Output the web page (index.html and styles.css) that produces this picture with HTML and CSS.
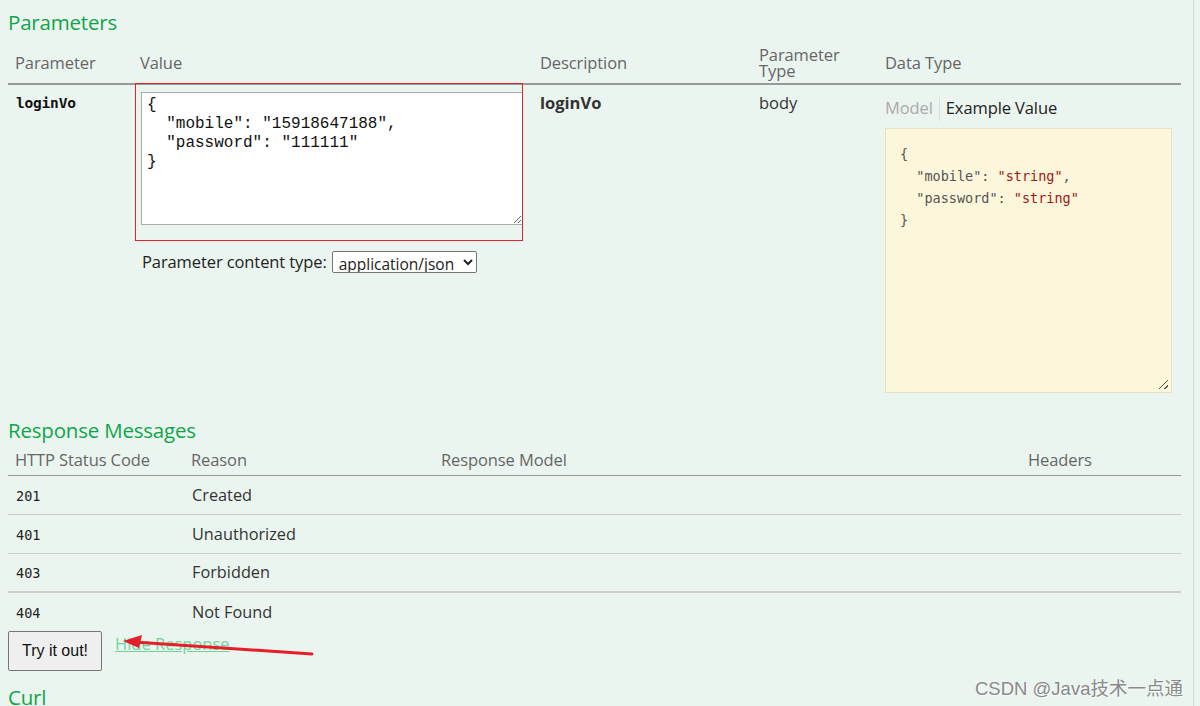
FILE: index.html
```html
<!DOCTYPE html>
<html>
<head>
<meta charset="utf-8">
<link rel="stylesheet" href="styles.css">
</head>
<body>
<div class="page">
  <h4 class="section-title">Parameters</h4>
  <table class="params">
    <thead>
      <tr>
        <th class="c-param">Parameter</th>
        <th class="c-value">Value</th>
        <th class="c-desc">Description</th>
        <th class="c-ptype">Parameter<br>Type</th>
        <th class="c-dtype">Data Type</th>
      </tr>
    </thead>
    <tbody>
      <tr>
        <td class="c-param"><code class="pname">loginVo</code></td>
        <td class="c-value">
          <div class="value-wrap">
            <textarea class="body-input" spellcheck="false">{
  "mobile": "15918647188",
  "password": "111111"
}</textarea>
            <div class="annot-box"></div>
          </div>
          <div class="ctype">
            <label>Parameter content type:</label>
            <select class="ctype-select"><option>application/json</option></select>
          </div>
        </td>
        <td class="c-desc"><strong class="desc">loginVo</strong></td>
        <td class="c-ptype"><span class="ptype">body</span></td>
        <td class="c-dtype">
          <div class="tabs">
            <span class="tab tab-off">Model</span>
            <span class="tab tab-on">Example Value</span>
          </div>
          <div class="sample">
            <pre class="sample-code">{
  <span class="k">"mobile"</span>: <span class="s">"string"</span>,
  <span class="k">"password"</span>: <span class="s">"string"</span>
}</pre>
            <span class="grip"></span>
          </div>
        </td>
      </tr>
    </tbody>
  </table>

  <h4 class="section-title resp-title">Response Messages</h4>
  <table class="resp">
    <thead>
      <tr>
        <th class="r-code">HTTP Status Code</th>
        <th class="r-reason">Reason</th>
        <th class="r-model">Response Model</th>
        <th class="r-headers">Headers</th>
      </tr>
    </thead>
    <tbody>
      <tr><td class="r-code"><code>201</code></td><td class="r-reason">Created</td><td></td><td></td></tr>
      <tr><td class="r-code"><code>401</code></td><td class="r-reason">Unauthorized</td><td></td><td></td></tr>
      <tr class="thick"><td class="r-code"><code>403</code></td><td class="r-reason">Forbidden</td><td></td><td></td></tr>
      <tr><td class="r-code"><code>404</code></td><td class="r-reason">Not Found</td><td></td><td></td></tr>
    </tbody>
  </table>

  <div class="actions">
    <button class="try-btn">Try it out!</button>
    <a class="hide-link" href="#">Hide Response</a>
    <svg class="arrow" width="210" height="30" viewBox="0 0 210 30">
      <line x1="192" y1="20" x2="14" y2="8" stroke="#e41f2a" stroke-width="3" stroke-linecap="round"/>
      <polygon points="3,7 22,1 19,14" fill="#e41f2a"/>
    </svg>
  </div>

  <h4 class="section-title curl-title">Curl</h4>
</div>
<div class="watermark">CSDN @Java技术一点通</div>
</body>
</html>
```

FILE: styles.css
```css
html, body {
  margin: 0;
  padding: 0;
  background: #ebf5f0;
  height: 100%;
  overflow: hidden;
}
body {
  font-family: "Open Sans", "Noto Sans", sans-serif;
  color: #333;
}
.page {
  width: 1173px;
  padding: 0 12px 0 8px;
  border-right: 1px solid #c2e6d0;
  min-height: 706px;
  box-sizing: content-box;
  position: relative;
}
.section-title {
  margin: 0;
  padding-top: 9px;
  font-size: 20.5px;
  line-height: 26px;
  font-weight: 400;
  color: #10a54a;
  letter-spacing: -0.2px;
}
table {
  border-collapse: collapse;
  width: 1173px;
  table-layout: fixed;
}
th {
  font-weight: 400;
  color: #666;
  font-size: 16.5px;
  line-height: 16px;
  text-align: left;
  vertical-align: middle;
  padding: 0 7px;
  letter-spacing: -0.1px;
}
.params {
  margin-top: 8px;
}
.params thead tr {
  height: 41px;
  border-bottom: 2px solid #999;
}
.params td {
  vertical-align: top;
  padding: 0 7px;
}
.c-param { width: 113px; }
.c-value { width: 386px; }
.c-desc { width: 205px; }
.c-ptype { width: 112px; }
td.c-value { padding: 0; }
.params th.c-value { padding-left: 5px; }

.pname {
  display: block;
  margin-top: 10px;
  font-family: "DejaVu Sans Mono", "Liberation Mono", monospace;
  font-weight: 700;
  font-size: 14.5px;
  line-height: 16px;
  color: #111;
  padding-left: 1px;
  letter-spacing: -0.2px;
}
.value-wrap {
  position: relative;
  padding: 7px 0 0 6px;
  height: 149px;
  box-sizing: content-box;
}
.body-input {
  display: block;
  width: 382px;
  height: 133px;
  box-sizing: border-box;
  border: 1px solid #a9a9a9;
  background: #fff;
  font-family: "Liberation Mono", monospace;
  font-size: 16px;
  line-height: 19px;
  padding: 3px 5px 2px;
  margin: 0;
  color: #111;
  resize: both;
  overflow: hidden;
}
.annot-box {
  position: absolute;
  left: 0;
  top: -2px;
  width: 386px;
  height: 156px;
  border: 1px solid #e8202a;
  pointer-events: none;
}
.ctype {
  display: flex;
  align-items: center;
  gap: 5px;
  margin-top: 9px;
  padding-left: 7px;
  font-size: 16.5px;
  color: #222;
  letter-spacing: -0.1px;
}
.ctype-select {
  font-family: "Open Sans", sans-serif;
  font-size: 15.5px;
  height: 22px;
  width: 145px;
  border: 1px solid #767676;
  border-radius: 2px;
  background: #fff;
  color: #222;
  padding: 0 2px;
}
.desc {
  display: block;
  margin-top: 9px;
  font-weight: 700;
  font-size: 16.5px;
  line-height: 17px;
  color: #333;
}
.ptype {
  display: block;
  margin-top: 9px;
  font-size: 16.5px;
  line-height: 17px;
  color: #333;
}
.tabs {
  display: flex;
  align-items: stretch;
  margin-top: 12px;
  height: 24px;
  font-size: 16.5px;
  line-height: 22px;
  letter-spacing: -0.1px;
}
.tab-off {
  color: #aaa;
  padding-right: 6px;
  border-right: 1px solid #ddd;
}
.tab-on {
  color: #222;
  padding-left: 6px;
}
.sample {
  position: relative;
  margin-top: 7px;
  width: 287px;
  height: 265px;
  box-sizing: border-box;
  background: #fcf6db;
  border: 1px solid #e5e0c6;
}
.sample-code {
  margin: 0;
  padding: 14px 14px;
  font-family: "DejaVu Sans Mono", "Liberation Mono", monospace;
  font-size: 13.5px;
  line-height: 22px;
  color: #555;
}
.sample-code .s { color: #a31515; }
.grip {
  position: absolute;
  right: 3px;
  bottom: 3px;
  width: 9px;
  height: 9px;
  background:
    linear-gradient(135deg, transparent 45%, #555 45%, #555 55%, transparent 55%),
    linear-gradient(135deg, transparent 75%, #555 75%, #555 85%, transparent 85%);
}

.resp-title {
  padding-top: 24px;
}
.resp {
  margin-top: 4px;
}
.resp thead tr {
  height: 28px;
  border-bottom: 1px solid #999;
}
.resp th {
  vertical-align: bottom;
  padding-bottom: 7px;
}
.r-code { width: 162px; }
.r-reason { width: 236px; }
.r-model { width: 573px; }
.resp tbody tr {
  height: 39px;
  border-bottom: 1px solid #ccc;
}
.resp tbody tr.thick { border-bottom: 2px solid #ccc; }
.resp tbody tr:last-child { border-bottom: none; height: 38px; }
.resp td {
  padding: 0 7px;
  vertical-align: middle;
  font-size: 16.3px;
  color: #333;
}
.resp td.r-reason { padding-left: 8px; }
.resp code {
  font-family: "DejaVu Sans Mono", "Liberation Mono", monospace;
  font-size: 13.5px;
  color: #222;
  padding-left: 1px;
}

.actions {
  position: relative;
  display: flex;
  align-items: flex-start;
  gap: 13px;
  height: 40px;
  margin-top: 1px;
}
.try-btn {
  width: 94px;
  height: 40px;
  font-family: "Liberation Sans", Arial, sans-serif;
  font-size: 16px;
  color: #111;
  background: #efefef;
  border: 1px solid #767676;
  border-radius: 2px;
  padding: 0;
}
.hide-link {
  font-size: 16.5px;
  line-height: 22px;
  margin-top: 2px;
  color: #72d39a;
  text-decoration: underline;
}
.arrow {
  position: absolute;
  left: 112px;
  top: 3px;
}
.curl-title {
  padding-top: 13px;
}
.watermark {
  position: absolute;
  left: 975px;
  top: 674px;
  font-family: "Liberation Sans", "Noto Sans CJK SC", sans-serif;
  font-size: 18.5px;
  color: #8a8a8a;
  text-shadow: 1px 1px 0 rgba(255,255,255,0.7);
  white-space: nowrap;
}
```
